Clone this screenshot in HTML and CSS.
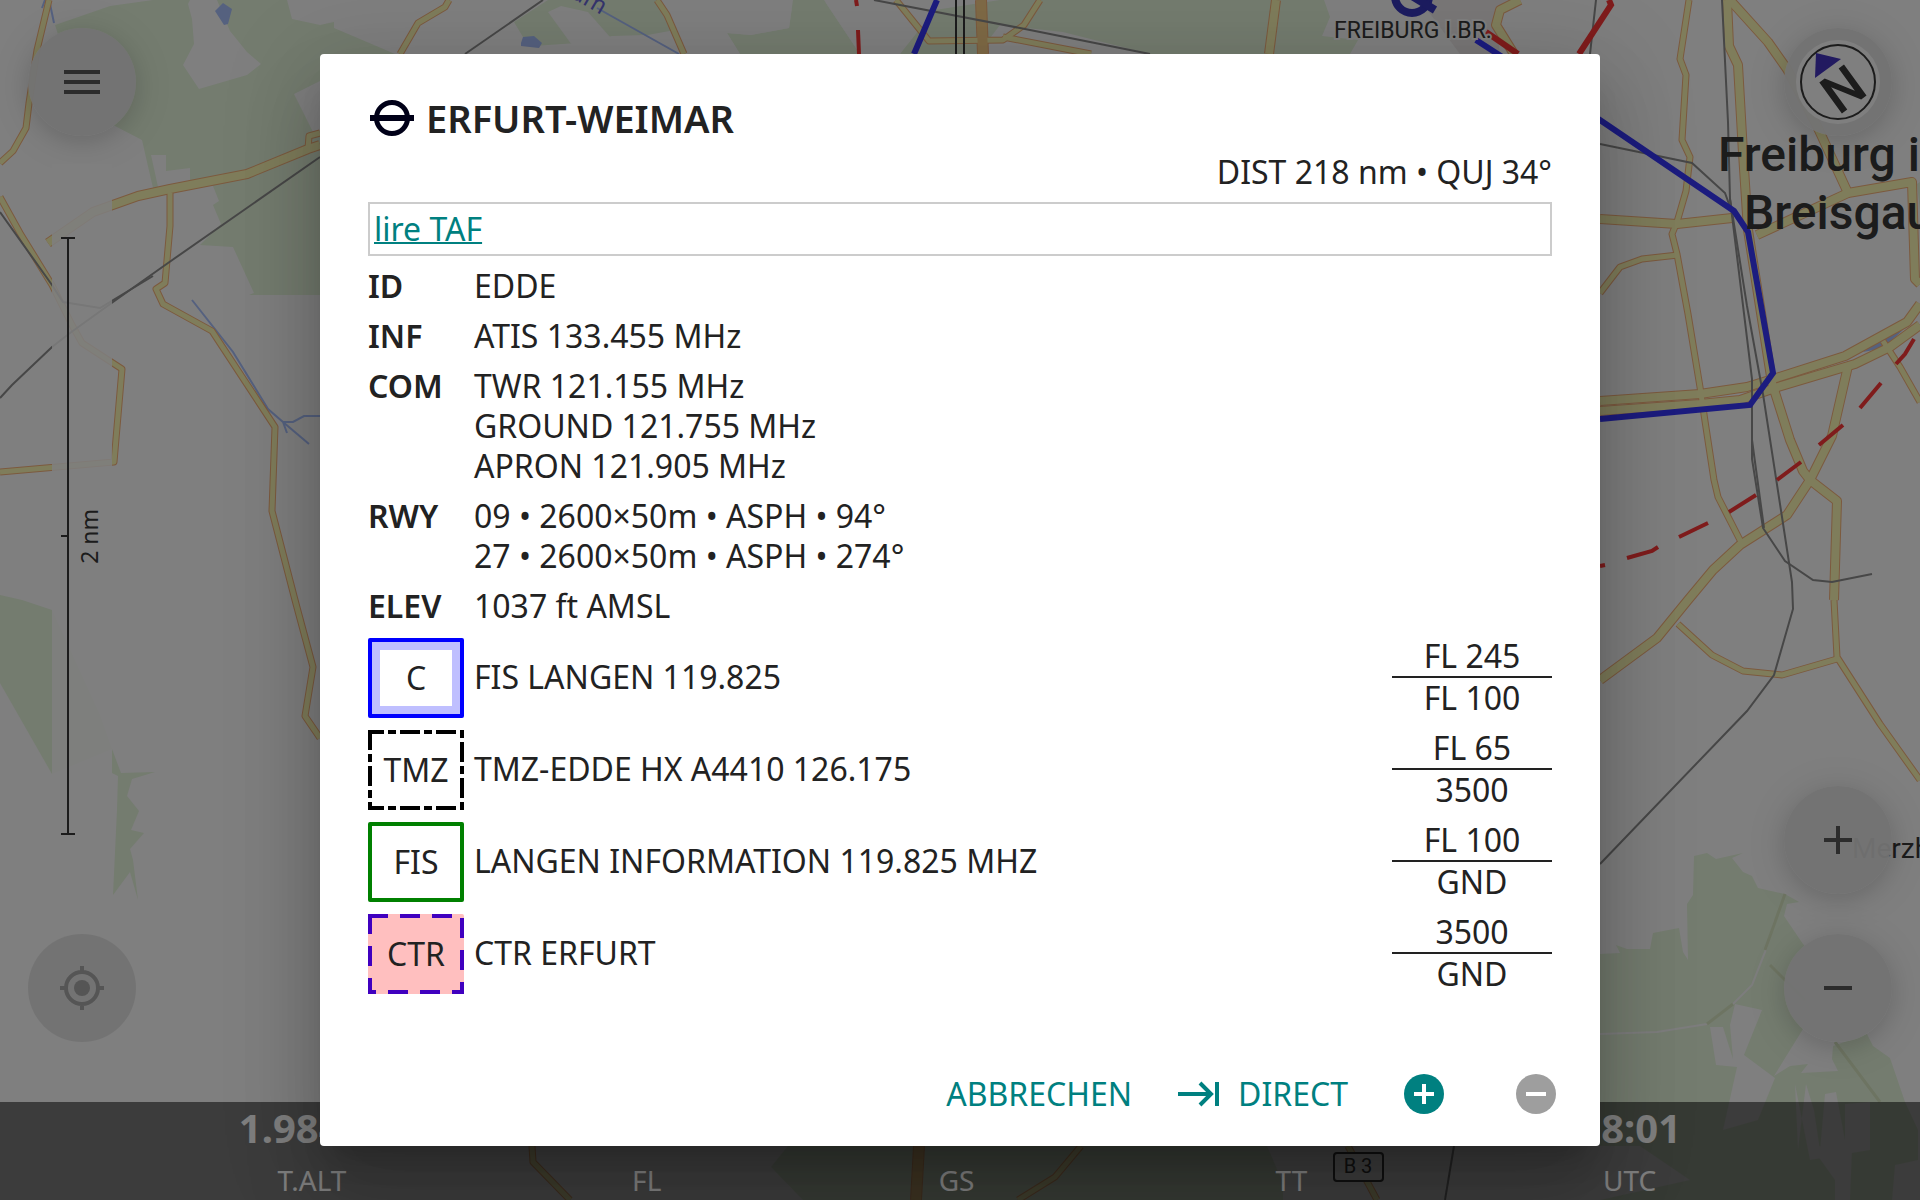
FILE: index.html
```html
<!DOCTYPE html>
<html lang="de">
<head>
<meta charset="utf-8">
<meta name="viewport" content="width=device-width, initial-scale=1">
<title>ERFURT-WEIMAR</title>
<link rel="stylesheet" href="styles.css">
</head>
<body>
<div class="app">
  <svg class="map" viewBox="0 0 1920 1200" preserveAspectRatio="xMidYMid slice" aria-hidden="true">
    <defs>
      <!-- minor roads -->
      <g id="roads-s">
        <path d="M49 0L37 50L29 103L26 128L13 151L0 163"/>
        <path d="M0 197L20 233L52 285L72 325L82 343L122 369L114 462L0 472"/>
        <path d="M170 193V226L165 283L156 289L163 304L212 331L275 427L272 511L295 600L313 667L305 716L320 738"/>
        <path d="M308 149L309 136L320 133"/>
        <path d="M449 0L445 7L418 23L400 54"/>
        <path d="M657 0L667 15L684 54"/>
        <path d="M896 0L929 41L1003 40L1024 25L1040 0"/>
        <path d="M1003 37L1091 54"/>
        <path d="M1689 0L1680 59L1686 75L1682 140L1690 157L1686 191L1677 222L1672 234L1677 254L1688 314L1700 387L1705 421L1714 480L1718 497L1741 542"/>
        <path d="M1600 293L1620 267L1642 259L1678 255"/>
        <path d="M1883 341L1900 367L1920 402"/>
        <path d="M1678 624L1712 655L1743 671L1782 675L1837 659"/>
        <path d="M1834 600L1837 657L1880 724L1920 780"/>
        <path d="M532 1146L533 1162L570 1200M1081 1146L1055 1177L1018 1200M1348 1146L1377 1200"/>
      </g>
      <!-- main roads -->
      <g id="roads-l">
        <path d="M48 243L93 212L138 196L170 189L247 174L308 149L320 145"/>
        <path d="M1276 0L1269 54"/>
        <path d="M1520 0L1500 10L1496 25L1514 54"/>
        <path d="M1727 0L1729 46L1738 65L1743 153L1748 230L1772 383L1790 440L1803 471L1810 480L1837 501L1834 600"/>
        <path d="M1730 0L1768 42L1787 69L1817 126L1848 193L1912 182L1915 279L1920 284"/>
        <path d="M1848 193L1757 235"/>
        <path d="M1600 219L1677 224L1732 218"/>
        <path d="M1600 401L1700 394L1747 387L1773 379L1845 356L1907 322L1920 304"/>
        <path d="M1600 411L1700 404L1740 400L1778 387L1855 364L1890 347L1920 325"/>
        <path d="M1848 366L1832 436L1810 480L1787 515L1740 545L1713 570L1688 600L1657 638L1600 680"/>
      </g>
      <g id="roads-o">
        <path d="M981 0L983 54M919 1146L916 1200"/>
      </g>
    </defs>

    <rect class="land" width="1920" height="1200"/>

    <g class="forest">
      <path d="M55 25L110 6L153 0H840L620 40L330 60V295H249L254 293L233 247L200 245L221 224L213 205L219 201L213 186L190 182V168L166 171V155H151L158 187L153 188L142 140L115 126L82 110Z"/>
      <path d="M0 595L22 600L52 610L100 715L112 749L52 774L0 683Z"/>
      <path d="M112 749L121 773L155 772L132 779L127 796L139 811L131 830L144 833L130 849L133 860L138 900L130 872L113 895L117 810L118 776L112 773Z"/>
      <path d="M793 0L789 28L751 35L727 33L740 54H860L824 0Z"/>
      <path d="M900 54L935 10L1000 0H1324L1330 17L1322 36L1358 40L1350 54Z"/>
      <path d="M1917 184L1920 182V210Z"/>
      <path d="M1600 954L1620 953L1616 945L1627 949H1650L1653 933L1679 928L1683 952L1688 960L1687 904L1693 895L1694 856L1707 853L1716 859L1743 853L1732 858L1743 872L1752 876L1758 888L1785 894L1799 902L1787 904L1784 916L1803 944L1840 985L1803 1029L1774 1076L1790 1066L1808 1064L1801 1073L1838 1071L1832 1059L1833 1046L1867 1034L1873 1046L1890 1058L1905 1102L1918 1130V1160L1895 1165L1892 1200H1850L1852 1150L1810 1145L1835 1180V1200H1600Z"/>
      <path d="M788 1146L771 1167L803 1200H1283V1183L1267 1146Z"/>
    </g>
    <g class="land">
      <path d="M188 4L190 0H217L230 31L247 52L261 64L247 75L199 89L183 65L194 44L192 19Z"/>
      <path d="M287 0L292 19L320 25L334 22V28L395 54H534L523 37L514 22L548 0Z"/>
      <path d="M294 94L330 76V140L313 132Z"/>
      <path d="M548 12L561 6L588 12L610 37L577 52Z"/>
      <path d="M603 38L612 36L644 35L660 54H590ZM660 0H793L789 28L751 35L727 33L740 54H684L667 15Z"/>
      <path d="M824 0H935L900 54H860Z"/>
      <path d="M1000 25L1063 32L1150 54H985L990 38Z"/>
      <path d="M1723 1130L1737 1067L1716 1065L1710 1027H1723L1733 1059L1730 1025L1735 1004L1762 1010L1744 1055L1775 1078L1758 1120Z"/>
      <path d="M1795 1084L1798 1150L1806 1084L1814 1110L1820 1150L1825 1094L1836 1092L1845 1140V1104L1870 1102V1150L1810 1160Z"/>
      <path d="M1640 1146L1690 1180L1600 1200V1146Z"/>
    </g>
    <path class="clearing" d="M1775 920L1765 952L1752 985L1733 1004L1707 1024L1657 1032L1600 1034"/>
    <path class="track" d="M1785 894L1765 950M1733 1004L1707 1024M1770 965L1805 1000M1835 1042L1880 1102"/>
    <path class="town" d="M1420 0H1510L1496 25L1500 54H1460Z"/>

    <g class="water">
      <path d="M215 11L223 3L232 9L228 24L224 25Z"/>
      <path d="M521 43L523 37L534 36L542 43L539 48L521 46Z"/>
      <path d="M1863 352L1885 337L1903 330L1890 342L1874 350Z"/>
    </g>
    <g class="stream">
      <path d="M42 8L45 0M50 4L54 23M192 300L233 352L268 409L283 422L309 444M283 422H293L304 416H320M283 422L287 433"/>
      <path d="M597 8L679 54"/>
    </g>

    <use href="#roads-s" class="case case-s"/>
    <use href="#roads-l" class="case case-l"/>
    <use href="#roads-o" class="case case-o"/>
    <use href="#roads-s" class="fill fill-s"/>
    <use href="#roads-l" class="fill fill-l"/>
    <use href="#roads-o" class="fill fill-o"/>

    <g class="rail">
      <path d="M0 212L52 285L63 302L100 308L153 276"/>
      <path d="M0 398L12 385L52 347L70 333L113 302L168 263L320 157M465 54L543 0"/>
      <path d="M874 0L1020 28L1150 54M1596 0L1590 54"/>
      <path d="M1722 0L1728 122L1730 199L1752 379V459L1763 528L1785 561L1813 580L1832 582L1872 574"/>
      <path d="M1730 199L1747 306L1763 394L1782 517L1792 582L1793 609L1774 675L1747 711L1600 864"/>
      <path d="M1752 440L1764 528M1600 144L1692 163L1725 193L1733 215M1454 1146L1445 1200"/>
    </g>

    <g class="runway"><path d="M956 0V54M964 0V54"/></g>
    <g class="route-blue">
      <path d="M937 0L914 54M1476 40L1600 120L1734 211L1748 232L1773 373L1750 405L1600 419"/>
    </g>
    <g class="route-red">
      <path d="M1486 32L1518 54M1609 0L1611 5L1579 54"/>
    </g>
    <g class="route-dash">
      <path d="M856 0L857 6M858 30L859 54M1600 566L1605 565M1627 558L1652 551L1658 547M1679 537L1708 523M1729 512L1756 495M1777 480L1801 462M1819 445L1843 425M1860 408L1881 383M1896 364L1905 354L1914 339"/>
    </g>
    <g class="airfield">
      <circle cx="1412" cy="-4" r="17"/>
      <path d="M1412 -4L1435 10"/>
    </g>

    <text class="river-name" transform="translate(570 -3) rotate(30)">am</text>
    <text class="field-name" x="1334" y="38">FREIBURG I.BR.</text>
    <text class="city" x="1718" y="171">Freiburg im</text>
    <text class="city" x="1744" y="229">Breisgau</text>
    <text class="village" x="1852" y="858">Merzhausen</text>
    <rect class="shield" x="1334" y="1153" width="49" height="28" rx="3"/>
    <text class="shield-name" x="1358" y="1173">B 3</text>
  </svg>

  <div class="hud">
    <div class="controls">
      <div class="side">
        <button class="round" type="button" aria-label="Menü">
          <svg viewBox="0 0 24 24"><path d="M3 18h18v-2H3v2zm0-5h18v-2H3v2zm0-7v2h18V6H3z"/></svg>
        </button>
        <div class="scale">
          <div class="ruler"></div>
          <span class="scale-label">2 nm</span>
        </div>
        <button class="round round-off" type="button" aria-label="Position">
          <svg viewBox="0 0 24 24"><circle cx="12" cy="12" r="4"/><path d="M12 4a8 8 0 1 0 0 16a8 8 0 0 0 0-16M12 1v3M12 20v3M1 12h3M20 12h3" fill="none" stroke="currentColor" stroke-width="2"/></svg>
        </button>
      </div>
      <div class="side side-right">
        <button class="round" type="button" aria-label="Norden">
          <svg class="compass" viewBox="-42 -42 84 84">
            <circle r="42" class="dial"/>
            <circle r="37" class="ring"/>
            <path d="M-22 -29L3 -23L-23 -4Z" class="needle"/>
            <text class="north" transform="translate(5 7) rotate(-36)" y="19">N</text>
          </svg>
        </button>
        <div class="zoom">
          <button class="round" type="button" aria-label="Vergrößern">
            <svg viewBox="0 0 24 24"><path d="M19 13h-6v6h-2v-6H5v-2h6V5h2v6h6v2z"/></svg>
          </button>
          <button class="round" type="button" aria-label="Verkleinern">
            <svg viewBox="0 0 24 24"><path d="M19 13H5v-2h14v2z"/></svg>
          </button>
        </div>
      </div>
    </div>
    <div class="bar">
      <div class="gauge"><b>1.984 ft</b><span>T.ALT</span></div>
      <div class="gauge"><b></b><span>FL</span></div>
      <div class="gauge gauge-wide"><b></b><span>GS</span></div>
      <div class="gauge gauge-wide"><b></b><span>TT</span></div>
      <div class="gauge"><b>18:01</b><span>UTC</span></div>
    </div>
  </div>

  <div class="backdrop">
    <div class="dialog" role="dialog" aria-modal="true" aria-labelledby="title">
      <div class="content">
        <h1 class="title">
          <svg viewBox="0 0 44 36"><circle cx="22" cy="18" r="15.5" fill="none" stroke="currentColor" stroke-width="5"/><path d="M0 15h44v6H0z" fill="currentColor"/></svg>
          <span id="title">ERFURT-WEIMAR</span>
        </h1>
        <p class="distance">DIST 218 nm • QUJ 34°</p>
        <div class="taf"><a href="#taf">lire TAF</a></div>
        <dl class="facts">
          <dt>ID</dt><dd>EDDE</dd>
          <dt>INF</dt><dd>ATIS 133.455 MHz</dd>
          <dt>COM</dt><dd>TWR 121.155 MHz<br>GROUND 121.755 MHz<br>APRON 121.905 MHz</dd>
          <dt>RWY</dt><dd>09 • 2600×50m • ASPH • 94°<br>27 • 2600×50m • ASPH • 274°</dd>
          <dt>ELEV</dt><dd>1037 ft AMSL</dd>
        </dl>
        <ul class="airspaces">
          <li class="airspace">
            <span class="tag tag-c">C</span>
            <span class="name">FIS LANGEN 119.825</span>
            <span class="limits"><span>FL 245</span><span>FL 100</span></span>
          </li>
          <li class="airspace">
            <span class="tag"><svg viewBox="0 0 96 80"><rect x="2" y="2" width="92" height="76" fill="none" stroke="#000" stroke-width="4" stroke-dasharray="20 4 8 4" stroke-dashoffset="6"/></svg><span>TMZ</span></span>
            <span class="name">TMZ-EDDE HX A4410 126.175</span>
            <span class="limits"><span>FL 65</span><span>3500</span></span>
          </li>
          <li class="airspace">
            <span class="tag tag-fis">FIS</span>
            <span class="name">LANGEN INFORMATION 119.825 MHZ</span>
            <span class="limits"><span>FL 100</span><span>GND</span></span>
          </li>
          <li class="airspace">
            <span class="tag tag-ctr"><svg viewBox="0 0 96 80"><rect x="2" y="2" width="92" height="76" fill="none" stroke="#4000bf" stroke-width="4" stroke-dasharray="20 12" stroke-dashoffset="2"/></svg><span>CTR</span></span>
            <span class="name">CTR ERFURT</span>
            <span class="limits"><span>3500</span><span>GND</span></span>
          </li>
        </ul>
      </div>
      <div class="actions">
        <button class="action" type="button">ABBRECHEN</button>
        <button class="action" type="button">
          <svg class="direct" viewBox="0 0 42 26"><path d="M0 13h33M22 2l11 11l-11 11M39 1v24" fill="none" stroke="currentColor" stroke-width="4"/></svg>
          DIRECT
        </button>
        <button class="disc" type="button" aria-label="Hinzufügen">
          <svg viewBox="0 0 40 40"><circle cx="20" cy="20" r="20" fill="currentColor"/><path d="M10 20h20M20 10v20" stroke="#fff" stroke-width="4"/></svg>
        </button>
        <button class="disc" type="button" aria-label="Entfernen" disabled>
          <svg viewBox="0 0 40 40"><circle cx="20" cy="20" r="20" fill="currentColor"/><path d="M10 20h20" stroke="#fff" stroke-width="4"/></svg>
        </button>
      </div>
    </div>
  </div>
</div>
</body>
</html>
```
FILE: styles.css
```css
* {
  box-sizing: border-box;
}

body {
  margin: 0;
  font-family: "Noto Sans", sans-serif;
  font-size: 32px;
  line-height: 40px;
  color: #222;
}

button {
  border: 0;
  padding: 0;
  background: none;
  font: inherit;
  color: inherit;
}

/* map, controls and dialog are stacked in one cell */
.app {
  display: grid;
  grid-template: minmax(100vh, auto) / 100%;
  overflow: hidden;
}

.map,
.hud,
.backdrop {
  grid-area: 1 / 1;
}

.map {
  width: 100%;
  height: 100%;
  min-height: 0;
  contain: size;
}

.map .land { fill: #fefefe; }
.forest { fill: #e8f8de; }
.water { fill: #aac2ff; }
.town { fill: #f2eeee; }
.stream { fill: none; stroke: #aac2ff; stroke-width: 2; }
.clearing { fill: none; stroke: #fafafa; stroke-width: 2; }
.track { fill: none; stroke: #dbe8c4; stroke-width: 3; }

.case { fill: none; stroke: #f8b47c; stroke-linejoin: round; }
.fill { fill: none; stroke: #fffab6; stroke-linejoin: round; }
.case-s { stroke-width: 7; }
.fill-s { stroke-width: 5; }
.case-l { stroke-width: 10; }
.fill-l { stroke-width: 8; }
.case-o { stroke-width: 12; }
.fill-o { stroke-width: 10; stroke: #ffd48c; }

.rail { fill: none; stroke: #8e8e8e; stroke-width: 2; }
.runway { stroke: #383838; stroke-width: 2; }
.route-blue { fill: none; stroke: #3838ff; stroke-width: 6; }
.route-red { fill: none; stroke: #ff3838; stroke-width: 6; }
.route-dash { fill: none; stroke: #ff3838; stroke-width: 4; }
.airfield { fill: none; stroke: #3838c0; stroke-width: 8; }

.river-name {
  font: 24px "Noto Sans", sans-serif;
  fill: #6868d8;
}

.field-name {
  font: 23px Roboto, sans-serif;
  fill: #383838;
  stroke: #fefefe;
  stroke-width: 4;
  paint-order: stroke;
}

.city {
  font: 500 48px Roboto, sans-serif;
  fill: #383838;
}

.village {
  font: 28px Roboto, sans-serif;
  fill: #383838;
}

.shield {
  fill: #fefefe;
  stroke: #444;
  stroke-width: 2;
}

.shield-name {
  font: 20px Roboto, sans-serif;
  fill: #444;
  text-anchor: middle;
}

/* controls over the map */
.hud {
  display: flex;
  flex-direction: column;
}

.controls {
  flex: 1;
  display: flex;
  justify-content: space-between;
  padding: 28px 28px 60px;
}

.side {
  display: flex;
  flex-direction: column;
  align-items: flex-start;
  gap: 28px;
}

.side-right {
  justify-content: space-between;
}

.zoom {
  display: flex;
  flex-direction: column;
  gap: 40px;
}

.round {
  display: grid;
  place-items: center;
  width: 108px;
  height: 108px;
  border-radius: 50%;
  background: rgba(230, 230, 230, 0.95);
  color: #585858;
  box-shadow: 0 6px 20px rgba(0, 0, 0, 0.08), 0 4px 40px rgba(0, 0, 0, 0.12);
}

.round svg {
  width: 48px;
  height: 48px;
  fill: currentColor;
}

.round-off {
  color: #aaa;
  box-shadow: none;
}

.round .compass {
  width: 84px;
  height: 84px;
}

.dial { fill: #fff; }
.ring { fill: none; stroke: #383838; stroke-width: 2; }
.needle { fill: #4434c0; }

.north {
  font: 500 54px Roboto, sans-serif;
  fill: #383838;
  text-anchor: middle;
}

.scale {
  flex: 1;
  display: flex;
  align-items: center;
  width: 60px;
  margin-left: 24px;
  padding: 73px 0 71px 9px;
  background: rgba(255, 255, 255, 0.85);
}

.ruler {
  align-self: stretch;
  width: 14px;
  border: solid #383838;
  border-width: 2px 0;
  background:
    linear-gradient(#383838, #383838) center / 2px 100% no-repeat,
    linear-gradient(#383838, #383838) left center / 7px 2px no-repeat;
}

.scale-label {
  writing-mode: vertical-rl;
  transform: rotate(180deg);
  font-size: 23px;
  line-height: 28px;
  color: #383838;
}

.bar {
  display: flex;
  justify-content: space-evenly;
  padding-bottom: 2px;
  background: rgba(0, 0, 0, 0.53);
  color: #fff;
  text-align: center;
}

.gauge {
  display: flex;
  flex-direction: column;
  gap: 8px;
  min-width: 46px;
}

.gauge-wide {
  min-width: 96px;
}

.gauge b {
  min-height: 52px;
  font-size: 40px;
  line-height: 52px;
}

.gauge span {
  font-size: 28px;
  line-height: 36px;
}

/* dialog */
.backdrop {
  position: relative;
  display: grid;
  place-items: center;
  padding: 48px;
  background: rgba(0, 0, 0, 0.5);
}

.dialog {
  width: 100%;
  max-width: 1280px;
  border-radius: 4px;
  background: #fff;
  box-shadow: 0 22px 30px -14px rgba(0, 0, 0, 0.2), 0 48px 76px 6px rgba(0, 0, 0, 0.14), 0 18px 92px 16px rgba(0, 0, 0, 0.12);
}

.content {
  display: flex;
  flex-direction: column;
  gap: 10px;
  padding: 40px 48px 48px;
}

.title {
  display: flex;
  align-items: center;
  gap: 12px;
  margin: 0;
  padding-left: 2px;
  font-size: 38px;
  font-weight: 600;
  line-height: 48px;
}

.title svg {
  width: 44px;
  height: 36px;
  color: #000018;
}

.distance {
  margin: 0;
  text-align: right;
}

.taf {
  padding: 5px 4px;
  border: 2px solid #ccc;
}

.taf a {
  color: #008080;
  text-decoration-thickness: 2px;
}

.facts {
  display: grid;
  grid-template-columns: 106px 1fr;
  row-gap: 10px;
  margin: 0;
}

.facts dt {
  font-weight: 600;
}

.facts dd {
  margin: 0;
}

.airspaces {
  display: grid;
  gap: 10px;
  margin: 0;
  padding: 0;
  list-style: none;
}

.airspace {
  display: grid;
  grid-template-columns: 96px 1fr 160px;
  column-gap: 10px;
  align-items: center;
}

.tag {
  display: grid;
  place-items: center;
  align-self: end;
  height: 80px;
  border-radius: 2px;
}

.tag > * {
  grid-area: 1 / 1;
}

.tag-c {
  border: 4px solid #00f;
  box-shadow: inset 0 0 0 8px #bfbfff;
}

.tag-fis {
  border: 4px solid #008000;
}

.tag-ctr {
  background: #ffbfbf;
}

.limits {
  display: grid;
  text-align: center;
}

.limits > :first-child {
  border-bottom: 2px solid #222;
}

.actions {
  display: flex;
  align-items: center;
  justify-content: flex-end;
  height: 104px;
  padding-right: 44px;
  color: #008080;
}

.action {
  display: flex;
  align-items: center;
  gap: 18px;
  margin-right: 46px;
}

.direct {
  width: 42px;
  height: 26px;
}

.disc {
  width: 40px;
  height: 40px;
  margin-left: 72px;
}

.action + .disc {
  margin-left: 10px;
}

.disc:disabled {
  color: #9e9e9e;
}

.disc svg {
  display: block;
}
```
